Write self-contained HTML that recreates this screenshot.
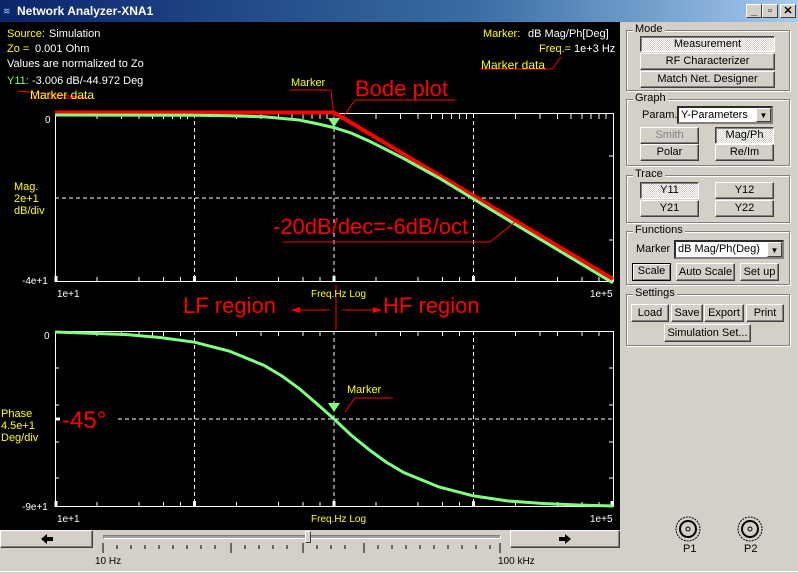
<!DOCTYPE html>
<html><head><meta charset="utf-8"><style>
*{box-sizing:border-box;margin:0;padding:0}
body{width:798px;height:574px;overflow:hidden;background:#d4d0c8;font-family:"Liberation Sans",sans-serif;font-size:11px;position:relative}
.a{position:absolute}
.title{left:0;top:0;width:798px;height:22px;background:linear-gradient(90deg,#0a246a,#3a6ea5 60%,#a6caf0);color:#fff;font-weight:bold;font-size:12px;line-height:22px;padding-left:17px}
.tb{top:4px;width:16px;height:14px;background:#d4d0c8;border:1px solid;border-color:#fff #404040 #404040 #fff;color:#000;font-size:11px;line-height:12px;text-align:center;font-weight:bold}
.btn{position:absolute;background:#d4d0c8;border:1px solid;border-color:#fff #404040 #404040 #fff;box-shadow:inset -1px -1px 0 #808080;text-align:center;color:#000;font-size:11px}
.on{background:repeating-conic-gradient(#d4d0c8 0 25%,#fff 0 50%) 0 0/2px 2px;border-color:#404040 #fff #fff #404040;box-shadow:inset 1px 1px 0 #808080}
.grp{position:absolute;border:1px solid #808080;box-shadow:1px 1px 0 #fff,inset 1px 1px 0 #fff}
.lg{position:absolute;background:#d4d0c8;padding:0 2px;font-size:11px;top:-8px;left:6px}
.sel{position:absolute;background:#fff;border:2px inset #808080;font-size:11px;padding-left:2px}
.dd{position:absolute;right:0;top:0;width:15px;height:100%;background:#d4d0c8;border:1px solid;border-color:#fff #404040 #404040 #fff;font-size:8px;text-align:center}
</style></head><body>
<div class="a title">Network Analyzer-XNA1</div>
<div class="a" style="left:3px;top:6px;color:#9cf;font-size:9px">≋</div>
<div class="a tb" style="left:746px">_</div><div class="a tb" style="left:762px">▫</div><div class="a tb" style="left:780px">✕</div>
<div class="a" style="left:0;top:22px;width:620px;height:508px;background:#000"></div>
<svg class="a" style="left:0;top:22px" width="620" height="508" viewBox="0 22 620 508" font-family="Liberation Sans" font-size="11">
<g stroke="#fff" fill="none">
<rect x="55.5" y="113.5" width="558" height="168"/>
<rect x="55.5" y="331.5" width="558" height="175"/>
<g stroke-dasharray="4,3"><path d="M194.5 114V282M334 114V282M473.5 114V282M55 198H613M194.5 331V507M334 331V507M473.5 331V507M55 419H613"/></g>
<g stroke-width="1"><path d="M97 114v5M121.5 114v5M139 114v5M152.5 114v5M163.5 114v5M172.5 114v5M180.5 114v5M187.5 114v5M236.5 114v5M261 114v5M278.5 114v5M292 114v5M303 114v5M312 114v5M320 114v5M327 114v5M376 114v5M400.5 114v5M418 114v5M431.5 114v5M442.5 114v5M451.5 114v5M459.5 114v5M466.5 114v5M515.5 114v5M540 114v5M557.5 114v5M571 114v5M582 114v5M591 114v5M599 114v5M606 114v5
M97 282v-5M139 282v-5M163.5 282v-5M180.5 282v-5M236.5 282v-5M278.5 282v-5M303 282v-5M320 282v-5M376 282v-5M418 282v-5M442.5 282v-5M459.5 282v-5M515.5 282v-5M557.5 282v-5M582 282v-5M599 282v-5
M97 331v5M121.5 331v5M139 331v5M152.5 331v5M163.5 331v5M180.5 331v5M236.5 331v5M261 331v5M278.5 331v5M303 331v5M320 331v5M376 331v5M400.5 331v5M418 331v5M442.5 331v5M459.5 331v5M515.5 331v5M540 331v5M557.5 331v5M582 331v5M599 331v5
M97 507v-5M139 507v-5M163.5 507v-5M180.5 507v-5M236.5 507v-5M278.5 507v-5M303 507v-5M320 507v-5M376 507v-5M418 507v-5M442.5 507v-5M459.5 507v-5M515.5 507v-5M557.5 507v-5M582 507v-5M599 507v-5
M613 156h-4M613 240h-4M613 368h-4M613 405h-4M613 442h-4M613 478h-4M55 368h4M55 405h4M55 442h4M55 478h4"/></g>
<g stroke-width="3"><path d="M56 276v6M194.5 276v6M334 276v6M473.5 276v6M612 276v6M56 501v6M194.5 501v6M334 501v6M473.5 501v6M612 501v6M55 419h5"/></g>
</g>
<path d="M55 112.5H334L613 279" stroke="#ff0000" stroke-width="4" fill="none"/>
<polyline points="55,115 194.5,115.2 229,115.8 264,116.7 299,120 316,123.5 334,127.6 351,133 369,141 386,149.5 404,158.7 439,178 473.5,199 508,220 543,241 578,262 613,283" stroke="#80ff80" stroke-width="3" fill="none"/>
<polyline points="55,332 125,334.5 160,337.5 194.5,342.2 229,351 264,365.3 282,376 299,388.4 316,403 334,419 351,435 369,449.6 386,462 404,472.7 439,487 473.5,495.9 508,501 543,503.5 578,505 613,506" stroke="#80ff80" stroke-width="3" fill="none"/>
<path d="M328 118h12l-6 9z" fill="#80ff80"/><path d="M328 403h12l-6 9z" fill="#80ff80"/>
<rect x="60" y="404" width="56" height="30" fill="#000"/>
<path d="M55 419h5" stroke="#fff" stroke-width="3"/>
<g stroke="#ff0000" fill="none"><path d="M30 98H90L18 91"/><path d="M331 90L334 117M290 90h40"/><path d="M355 100h100M355 100L341 120"/><path d="M283 242H490L515 222"/><path d="M480 69h72L561 57"/><path d="M345 412L355 398h38"/><path d="M297 310H330M342 310h33"/></g>
<path d="M291 310l9-3v6zM382 310l-9-3v6z" fill="#ff0000"/>
<path d="M336 285V330" stroke="#ff0000"/>
<g fill="#ffff00"><text x="7" y="37">Source:</text><text x="7" y="52">Zo =</text><text x="483" y="37">Marker:</text><text x="539" y="52">Freq.=</text>
<text x="30" y="99" font-size="12">Marker data</text><text x="481" y="69" font-size="12">Marker data</text>
<text x="291" y="86">Marker</text><text x="347" y="393">Marker</text>
<text x="14" y="190">Mag.</text><text x="14" y="202">2e+1</text><text x="14" y="214">dB/div</text>
<text x="1" y="417">Phase</text><text x="1" y="429">4.5e+1</text><text x="1" y="441">Deg/div</text>
<text x="311" y="297" font-size="10">Freq.Hz Log</text><text x="311" y="522" font-size="10">Freq.Hz Log</text></g>
<g fill="#fff"><text x="49" y="37">Simulation</text><text x="35" y="52">0.001 Ohm</text><text x="7" y="67">Values are normalized to Zo</text><text x="32" y="84">-3.006 dB/-44.972 Deg</text>
<text x="528" y="37">dB Mag/Ph[Deg]</text><text x="574" y="52">1e+3 Hz</text>
<text x="45" y="123" font-size="10">0</text><text x="22" y="284" font-size="10">-4e+1</text><text x="44" y="339" font-size="10">0</text><text x="22" y="510" font-size="10">-9e+1</text>
<text x="57" y="297" font-size="10">1e+1</text><text x="590" y="297" font-size="10">1e+5</text><text x="57" y="522" font-size="10">1e+1</text><text x="590" y="522" font-size="10">1e+5</text></g>
<text x="7" y="84" fill="#80ff80">Y11:</text>
<g fill="#ff0000" font-size="22"><text x="355" y="96">Bode plot</text><text x="273" y="234">-20dB/dec=-6dB/oct</text><text x="183" y="313">LF region</text><text x="383" y="313">HF region</text><text x="62" y="428" font-size="24">-45°</text></g>
</svg>
<div class="btn" style="left:0;top:530px;width:93px;height:18px"><svg width="12" height="10" style="margin-top:3px"><path d="M0 5L6 0V3H12V7H6V10Z" fill="#000"/></svg></div>
<div class="btn" style="left:510px;top:530px;width:110px;height:18px"><svg width="12" height="10" style="margin-top:3px"><path d="M12 5L6 0V3H0V7H6V10Z" fill="#000"/></svg></div>
<div class="a" style="left:103px;top:535px;width:398px;height:4px;border:1px solid;border-color:#808080 #fff #fff #808080;background:#a0a0a0"></div>
<div class="a" style="left:305px;top:531px;width:6px;height:12px;background:#d4d0c8;border:1px solid;border-color:#fff #404040 #404040 #fff"></div>
<svg class="a" style="left:100px;top:543px" width="410" height="20"><g stroke="#000"><path d="M3 0v10M131 0v10M203 0v10M264 0v10M400 0v10M17 2v4M31 2v4M45 2v4M59 2v4M73 2v4M87 2v4M101 2v4M115 2v4M145 2v4M159 2v4M173 2v4M187 2v4M217 2v4M231 2v4M245 2v4M278 2v4M292 2v4M306 2v4M320 2v4M334 2v4M348 2v4M362 2v4M376 2v4M390 2v4"/></g></svg>
<div class="a" style="left:95px;top:556px;font-size:10px">10 Hz</div>
<div class="a" style="left:498px;top:556px;font-size:10px">100 kHz</div>
<div class="a" style="left:0;top:571px;width:798px;height:1px;background:#fff"></div>
<svg class="a" style="left:672px;top:512px" width="110" height="45"><g fill="none" stroke="#000"><circle cx="16" cy="17" r="12" stroke-dasharray="2,1"/><circle cx="16" cy="17" r="8" stroke-width="2"/><circle cx="16" cy="17" r="2"/><circle cx="78" cy="17" r="12" stroke-dasharray="2,1"/><circle cx="78" cy="17" r="8" stroke-width="2"/><circle cx="78" cy="17" r="2"/></g></svg>
<div class="a" style="left:683px;top:543px;font-size:11px">P1</div><div class="a" style="left:744px;top:543px;font-size:11px">P2</div>
<div class="grp" style="left:626px;top:30px;width:164px;height:61px"><span class="lg">Mode</span></div>
<div class="btn on" style="left:640px;top:36px;width:135px;height:16px;line-height:14px">Measurement</div>
<div class="btn" style="left:640px;top:53px;width:135px;height:17px;line-height:15px">RF Characterizer</div>
<div class="btn" style="left:640px;top:71px;width:135px;height:17px;line-height:15px">Match Net. Designer</div>
<div class="grp" style="left:626px;top:99px;width:164px;height:67px"><span class="lg">Graph</span></div>
<div class="a" style="left:642px;top:109px">Param.</div>
<div class="sel" style="left:677px;top:106px;width:96px;height:18px;line-height:14px">Y-Parameters<div class="dd">▼</div></div>
<div class="btn" style="left:640px;top:127px;width:59px;height:17px;line-height:15px;color:#808080">Smith</div>
<div class="btn on" style="left:715px;top:127px;width:59px;height:17px;line-height:15px">Mag/Ph</div>
<div class="btn" style="left:640px;top:144px;width:59px;height:17px;line-height:15px">Polar</div>
<div class="btn" style="left:715px;top:144px;width:59px;height:17px;line-height:15px">Re/Im</div>
<div class="grp" style="left:626px;top:175px;width:164px;height:48px"><span class="lg">Trace</span></div>
<div class="btn on" style="left:640px;top:182px;width:59px;height:17px;line-height:15px">Y11</div>
<div class="btn" style="left:715px;top:182px;width:59px;height:17px;line-height:15px">Y12</div>
<div class="btn" style="left:640px;top:200px;width:59px;height:17px;line-height:15px">Y21</div>
<div class="btn" style="left:715px;top:200px;width:59px;height:17px;line-height:15px">Y22</div>
<div class="grp" style="left:626px;top:231px;width:164px;height:54px"><span class="lg">Functions</span></div>
<div class="a" style="left:636px;top:243px">Marker</div>
<div class="sel" style="left:674px;top:240px;width:110px;height:19px;line-height:15px">dB Mag/Ph(Deg)<div class="dd">▼</div></div>
<div class="btn" style="left:632px;top:263px;width:39px;height:18px;line-height:14px;border:1px solid #000;box-shadow:inset 1px 1px 0 #fff,inset -1px -1px 0 #808080">Scale</div>
<div class="btn" style="left:676px;top:263px;width:59px;height:18px;line-height:16px">Auto Scale</div>
<div class="btn" style="left:740px;top:263px;width:39px;height:18px;line-height:16px">Set up</div>
<div class="grp" style="left:626px;top:294px;width:164px;height:52px"><span class="lg">Settings</span></div>
<div class="btn" style="left:631px;top:304px;width:38px;height:18px;line-height:16px">Load</div>
<div class="btn" style="left:671px;top:304px;width:32px;height:18px;line-height:16px">Save</div>
<div class="btn" style="left:704px;top:304px;width:40px;height:18px;line-height:16px">Export</div>
<div class="btn" style="left:746px;top:304px;width:38px;height:18px;line-height:16px">Print</div>
<div class="btn" style="left:664px;top:324px;width:87px;height:18px;line-height:16px">Simulation Set...</div>
</body></html>
